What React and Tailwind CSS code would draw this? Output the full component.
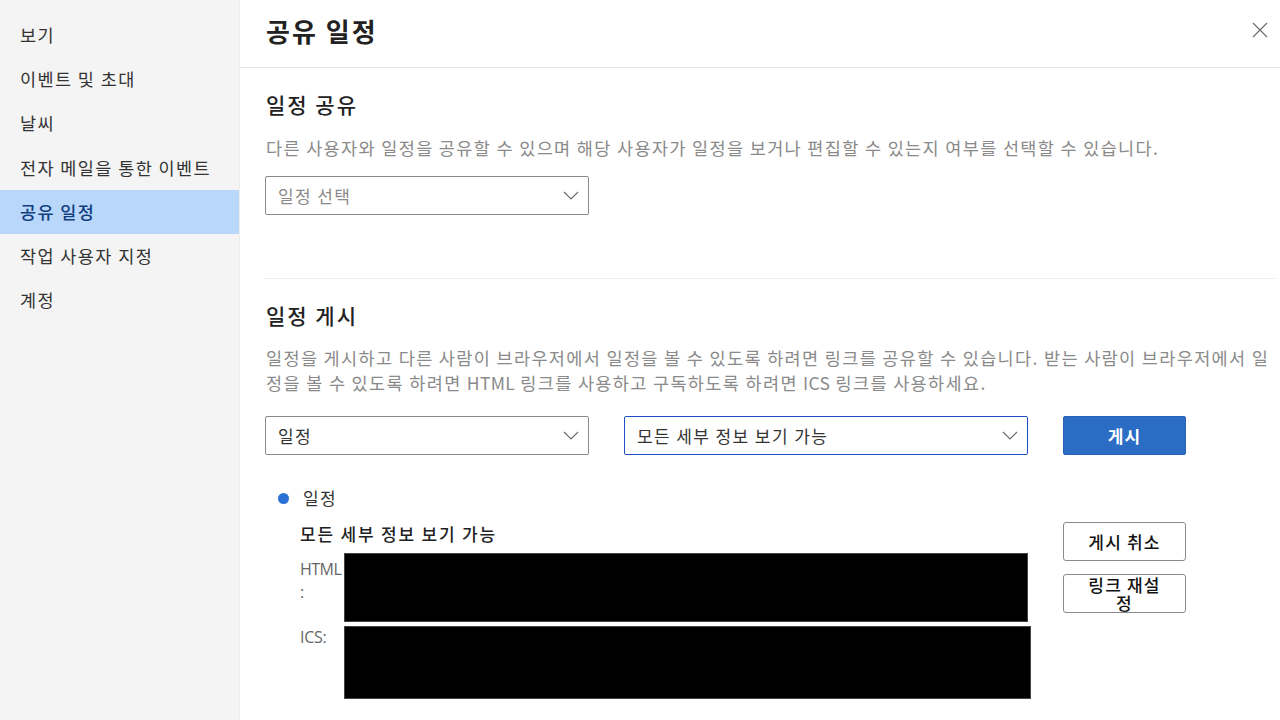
import React from "react";

const FONT = { fontFamily: '"Noto Sans CJK KR", "Noto Sans", sans-serif' };
const LATIN = { fontFamily: '"Open Sans", "Noto Sans CJK KR", sans-serif' };

function Chevron() {
  return (
    <svg width="16" height="9" viewBox="0 0 16 9" fill="none" className="shrink-0">
      <path d="M1 1 L8 8 L15 1" stroke="#6b6b6b" strokeWidth="1.1" />
    </svg>
  );
}

function Select({ text, placeholder, focused, width }) {
  return (
    <div
      className={
        "h-[39px] flex items-center justify-between pl-[12px] pr-[9px] rounded-[2px] bg-white " +
        (focused ? "border-[1.5px] border-[#1f4fc6]" : "border border-[#8a8a8a]") +
        " " + width
      }
    >
      <span className={"text-[17px] tracking-[1.4px] " + (placeholder ? "text-[#8a8a8a]" : "text-[#333]")}>{text}</span>
      <Chevron />
    </div>
  );
}

const navItems = ["보기", "이벤트 및 초대", "날씨", "전자 메일을 통한 이벤트", "공유 일정", "작업 사용자 지정", "계정"];

export default function App() {
  return (
    <div className="w-[1280px] h-[720px] flex overflow-hidden bg-white" style={FONT}>
      <aside className="w-[240px] shrink-0 bg-[#f4f4f4] border-r border-[#ececec] pt-[13px]">
        {navItems.map((n) => (
          <div
            key={n}
            className={
              "h-[44.2px] flex items-center pl-[20px] text-[17.5px] tracking-[1.4px] " +
              (n === "공유 일정" ? "bg-[#b9d6fb] text-[#123f7e] font-medium" : "text-[#333]")
            }
          >
            {n}
          </div>
        ))}
      </aside>

      <main className="flex-1 flex flex-col min-w-0">
        <header className="h-[68px] shrink-0 flex items-center justify-between pl-[26px] pr-[12px] border-b border-[#e6e6e6]">
          <h1 className="text-[26px] font-bold text-[#222] tracking-[2px] mt-[-6px]">공유 일정</h1>
          <svg width="16" height="16" viewBox="0 0 16 16" fill="none" className="mt-[-8px]">
            <path d="M1 1 L15 15 M15 1 L1 15" stroke="#6b6b6b" strokeWidth="1.2" />
          </svg>
        </header>

        <div className="pl-[25px] pr-[5px]">
          <section className="pt-[22px]">
            <h2 className="text-[21px] leading-[28px] font-medium text-[#222] tracking-[2px] pl-[1px]">일정 공유</h2>
            <p className="mt-[17px] text-[17.5px] leading-[25px] text-[#8a8a8a] tracking-[1.35px] whitespace-nowrap pl-[1px]">
              다른 사용자와 일정을 공유할 수 있으며 해당 사용자가 일정을 보거나 편집할 수 있는지 여부를 선택할 수 있습니다.
            </p>
            <div className="mt-[16px]">
              <Select text="일정 선택" placeholder width="w-[324px]" />
            </div>
          </section>

          <div className="mt-[63px] h-px bg-[#ececec]" />

          <section className="pt-[22px]">
            <h2 className="text-[21px] leading-[28px] font-medium text-[#222] tracking-[2px] pl-[1px]">일정 게시</h2>
            <p className="mt-[16px] text-[17.5px] leading-[25px] text-[#8a8a8a] tracking-[1.35px] whitespace-nowrap pl-[1px]">
              일정을 게시하고 다른 사람이 브라우저에서 일정을 볼 수 있도록 하려면 링크를 공유할 수 있습니다. 받는 사람이 브라우저에서 일
              <br />
              정을 볼 수 있도록 하려면 <span className="tracking-[0.3px]">HTML</span> 링크를 사용하고 구독하도록 하려면 <span className="tracking-[0.3px]">ICS</span> 링크를 사용하세요.
            </p>

            <div className="mt-[21px] flex items-center gap-[35px]">
              <Select text="일정" width="w-[324px]" />
              <Select text="모든 세부 정보 보기 가능" focused width="w-[404px]" />
              <button className="w-[123px] h-[39px] rounded-[2px] bg-[#2b6cc4] border border-[#2a63b5] text-white text-[17px] font-bold tracking-[1px]">
                게시
              </button>
            </div>

            <div className="mt-[31px] flex items-center h-[24px] pl-[13px]">
              <span className="w-[11px] h-[11px] rounded-full bg-[#2a72d6]" />
              <span className="ml-[14px] text-[17px] text-[#333] tracking-[1.4px]">일정</span>
            </div>

            <div className="flex mt-[12px]">
              <div className="ml-[35px] w-[731px]">
                <div className="text-[17px] leading-[24px] font-medium text-[#222] tracking-[1.8px]">모든 세부 정보 보기 가능</div>
                <div className="mt-[7px] flex">
                  <div className="w-[44px] pt-[5px] text-[16px] leading-[23px] text-[#666] whitespace-nowrap tracking-[-0.5px]" style={LATIN}>
                    HTML
                    <br />:
                  </div>
                  <div className="w-[684px] h-[69px] bg-black border border-[#444]" />
                </div>
                <div className="mt-[4px] flex">
                  <div className="w-[44px] text-[16px] leading-[23px] text-[#666] tracking-[-0.3px]" style={LATIN}>ICS:</div>
                  <div className="w-[687px] h-[73px] bg-black border border-[#444]" />
                </div>
              </div>
              <div className="ml-[32px] flex flex-col gap-[13px]">
                <button className="w-[123px] h-[39px] rounded-[3px] border border-[#8a8a8a] bg-white text-[17px] font-medium text-[#111] tracking-[1.2px]">
                  게시 취소
                </button>
                <button className="w-[123px] h-[39px] rounded-[3px] border border-[#8a8a8a] bg-white text-[17px] leading-[18px] font-medium text-[#111] tracking-[1.2px]">
                  링크 재설
                  <br />정
                </button>
              </div>
            </div>
          </section>
        </div>
      </main>
    </div>
  );
}
